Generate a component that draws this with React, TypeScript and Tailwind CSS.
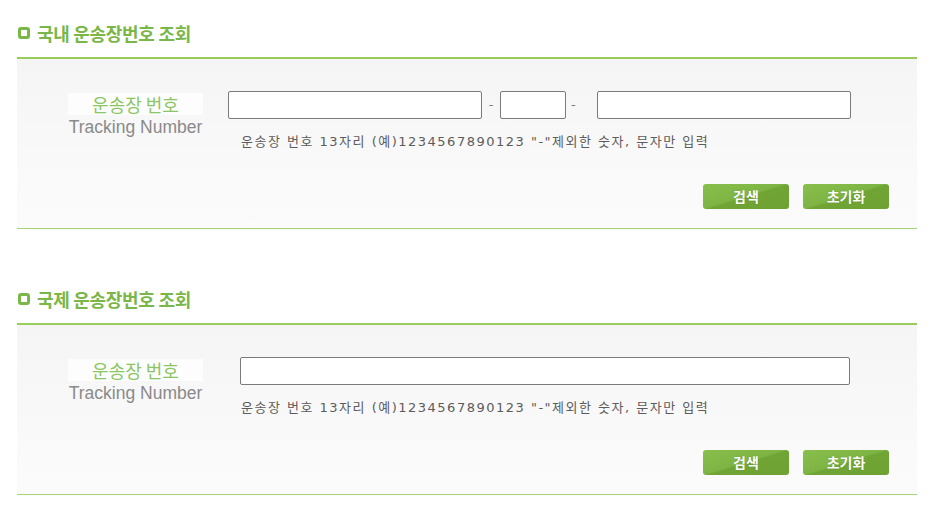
import React from 'react';

const KR = { fontFamily: '"Noto Sans CJK KR", "Liberation Sans", sans-serif' };
const HELP = { fontFamily: '"DejaVu Sans", "Noto Sans CJK KR", sans-serif' };

function Title({ text }: { text: string }) {
  return (
    <div className="flex h-[57px] items-start pl-[1px] pt-[21px]">
      <span className="mt-[6px] mr-[7px] inline-block h-[12px] w-[12px] rounded-[3px] border-[3px] border-[#7ab648] bg-white" />
      <span className="text-[18px] font-bold leading-[24px] tracking-[-0.3px] text-[#7ab648]" style={KR}>
        {text}
      </span>
    </div>
  );
}

function Label() {
  return (
    <div className="mt-[2px] ml-[51px] flex w-[135px] shrink-0 flex-col items-center">
      <div className="w-full bg-[#fdfdfd] text-center text-[18px] leading-[22px] text-[#8cc664]" style={KR}>
        운송장 번호
      </div>
      <div className="mt-[1px] text-[17.5px] leading-[22px] text-[#8a8a8a]" style={{ fontFamily: '"Liberation Sans", Arial, sans-serif' }}>
        Tracking Number
      </div>
    </div>
  );
}

function Buttons() {
  return (
    <div className="flex justify-end gap-[14px] pr-[28px]">
      {['검색', '초기화'].map((t) => (
        <button
          key={t}
          className="h-[25px] w-[86px] rounded-[3px] bg-[linear-gradient(163deg,#88bf4c_0%,#7db443_48%,#70a535_52%,#6ea233_100%)] text-[14px] font-bold text-white [text-shadow:0_0_1px_rgba(0,0,0,0.25)]"
          style={KR}
        >
          {t}
        </button>
      ))}
    </div>
  );
}

const helpText = '운송장 번호 13자리 (예)1234567890123 "-"제외한 숫자, 문자만 입력';

function Box({ w }: { w: string }) {
  return <input type="text" className={`h-[28px] ${w} rounded-[2px] border border-[#7a7a7a] bg-white`} />;
}

function Panel({ children }: { children: React.ReactNode }) {
  return (
    <div className="border-t-2 border-b border-t-[#98cd5b] border-b-[#a6d574] bg-[linear-gradient(180deg,#f5f5f5_0%,#f9f9f9_60%,#fbfbfb_100%)] pt-[32px] pb-[19px]">
      {children}
    </div>
  );
}

function Help({ pl }: { pl: string }) {
  return (
    <div className={`mt-[15px] ${pl} whitespace-nowrap text-[13px] leading-[16px] tracking-[1.5px] text-[#5c5c5c]`} style={HELP}>
      {helpText}
    </div>
  );
}

export default function App() {
  return (
    <div className="h-[509px] w-[931px] bg-white px-[17px]">
      <div className="w-[900px]">
        <Title text="국내 운송장번호 조회" />
        <Panel>
          <div className="flex items-start">
            <Label />
            <div className="ml-[25px] flex flex-col">
              <div className="flex items-center">
                <Box w="w-[254px]" />
                <span className="w-[18px] text-center text-[13px] text-[#777]" style={HELP}>-</span>
                <Box w="w-[66px]" />
                <span className="w-[31px] pl-[5px] text-[13px] text-[#777]" style={HELP}>-</span>
                <Box w="w-[254px]" />
              </div>
              <Help pl="pl-[13px]" />
            </div>
          </div>
          <div className="mt-[34px]">
            <Buttons />
          </div>
        </Panel>

        <div className="h-[37px]" />

        <Title text="국제 운송장번호 조회" />
        <Panel>
          <div className="flex items-start">
            <Label />
            <div className="ml-[37px] flex flex-col">
              <Box w="w-[610px]" />
              <Help pl="pl-[1px]" />
            </div>
          </div>
          <div className="mt-[34px]">
            <Buttons />
          </div>
        </Panel>
      </div>
    </div>
  );
}
